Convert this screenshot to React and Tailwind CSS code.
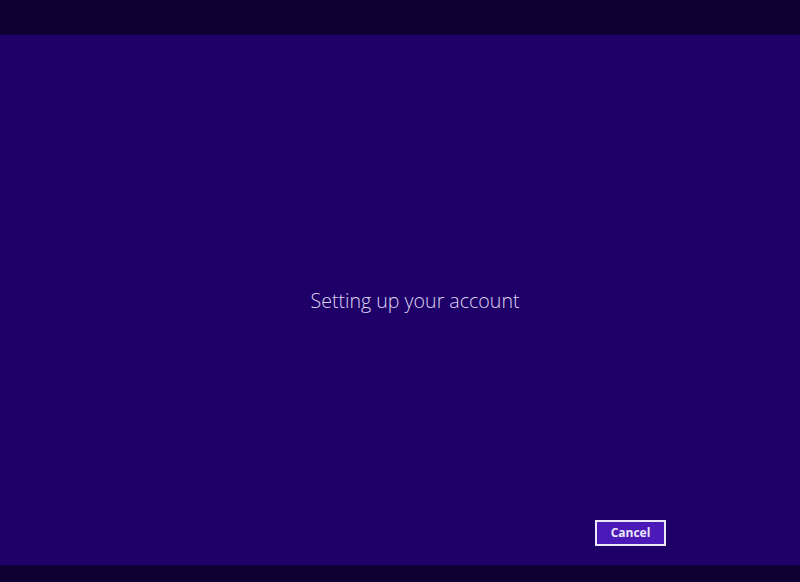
export default function App() {
  return (
    <div className="flex h-[582px] w-[800px] flex-col bg-[#1f0068] font-['Open_Sans',sans-serif]">
      <div className="h-[35px] bg-[#0e0033]" />
      <div className="flex flex-1 flex-col">
        <div className="flex flex-1 items-center justify-center pl-[30px] pt-[46px]">
          <h1 className="text-[19.6px] font-light leading-none text-[#ddd5f2]">Setting up your account</h1>
        </div>
        <div className="flex justify-end pb-[19px] pr-[134px]">
          <button className="h-[26px] w-[71px] border-2 border-[#ece8f7] bg-[#4a19b8] text-[12px] font-bold text-[#ebe6f8]">
            Cancel
          </button>
        </div>
      </div>
      <div className="h-[17px] bg-[#0e0033]" />
    </div>
  );
}
